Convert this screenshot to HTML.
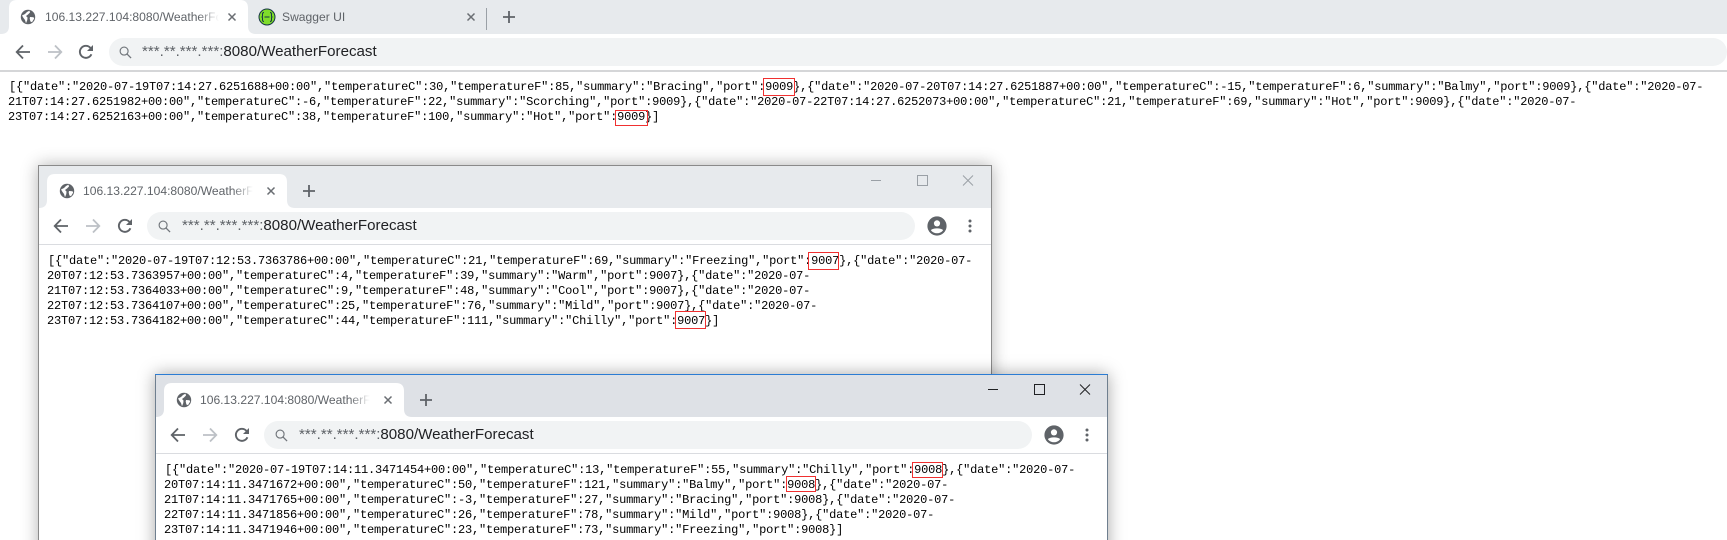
<!DOCTYPE html>
<html><head><meta charset="utf-8"><title>WeatherForecast</title>
<style>
html,body{margin:0;padding:0;background:#fff;width:1727px;height:540px;overflow:hidden}
#page{position:relative;width:1727px;height:540px;overflow:hidden;background:#fff}
.win{position:absolute;background:#fff;box-sizing:border-box;overflow:visible}
.strip{position:absolute;left:0;top:0;right:0;height:43px}
.addr{position:absolute;left:109px;top:47px;height:28px;background:#f1f3f4;border-radius:14px}
.sep{position:absolute;left:0;right:0;top:79px;height:1px;background:#dadce0}
.ic{position:absolute;left:0;top:0;overflow:visible}
.ttl{position:absolute;left:45px;top:19px;width:170px;height:16px;overflow:hidden;white-space:nowrap;font:12.1px/15px "Liberation Sans",sans-serif;color:#5f6368;-webkit-mask-image:linear-gradient(90deg,#000 88%,transparent);mask-image:linear-gradient(90deg,#000 88%,transparent)}
.url{position:absolute;left:144px;top:52px;white-space:nowrap;font:15.1px/18px "Liberation Sans",sans-serif;color:#202124}
.url i{font-style:normal;color:#5f6368}
.l{position:absolute;white-space:pre;font:12px/15px "Liberation Mono",monospace;letter-spacing:-.2px;color:#000}
.r{position:absolute;border:1px solid #f03030;box-sizing:border-box}
</style></head><body>
<div id="page">

<svg width="0" height="0" style="position:absolute"><defs>
<symbol id="globe" viewBox="0 0 16 16" overflow="visible"><circle cx="8" cy="8" r="7.2" fill="#5f6368"/><path d="M2 6.500 5 5 7 3 9.500 1.600 10 3.500 8 5.500 6 7 7.500 8.500 7.300 11 6 14.200 5 11 3.500 9ZM10 8l3.500.2.7 1.300-2.200 3.600-1.600-.6-.7-3Z" fill="#fff" stroke="none"/></symbol>
<symbol id="back" viewBox="0 0 16 16" overflow="visible"><path d="M15 8H2M8 1.500 1.700 8 8 14.500" fill="none" stroke="currentColor" stroke-width="1.800"/></symbol>
<symbol id="fwd" viewBox="0 0 16 16" overflow="visible"><path d="M1 8H14M8 1.500 14.300 8 8 14.500" fill="none" stroke="currentColor" stroke-width="1.800"/></symbol>
<symbol id="rel" viewBox="0 0 16 16" overflow="visible"><path d="M13.400 10.200A6 6 0 1 1 12.400 3.900" fill="none" stroke="#5f6368" stroke-width="1.900"/><path d="M15 1V7H9Z" fill="#5f6368"/></symbol>
<symbol id="srch" viewBox="0 0 14 14" overflow="visible"><circle cx="5.500" cy="5.500" r="4.300" fill="none" stroke="#70757a" stroke-width="1.200"/><path d="M8.700 8.700 13 13" stroke="#70757a" stroke-width="1.400"/></symbol>
<symbol id="x" viewBox="0 0 10 10" overflow="visible"><path d="M1.500 1.500 8.500 8.500M8.500 1.500 1.500 8.500" stroke="#6a6e73" stroke-width="1.500"/></symbol>
<symbol id="plus" viewBox="0 0 12 12" overflow="visible"><path d="M6 0V12M0 6H12" stroke="#5f6368" stroke-width="1.800"/></symbol>
<symbol id="prof" viewBox="0 0 20 20" overflow="visible"><circle cx="10" cy="10" r="9.600" fill="#5f6368"/><circle cx="10" cy="7.400" r="3.100" fill="#fff"/><path d="M3.900 14.200C5.600 11.800 14.400 11.800 16.100 14.200 14.600 16.200 12.400 17.200 10 17.200S5.400 16.200 3.900 14.200Z" fill="#fff"/></symbol>
</defs></svg>

<!-- main window -->
<div class="win" style="left:0;top:-9px;width:1727px;height:549px">
  <div class="strip" style="background:#e7eaed"></div>
  <svg class="ic" width="1727" height="80">
    <path d="M1 43Q9 43 9 35V17Q9 9 17 9H240Q248 9 248 17V35Q248 43 256 43Z" fill="#fff"/>
    <use href="#globe" x="20" y="18" width="16" height="16"/>
    <use href="#x" x="227" y="21" width="10" height="10"/>
    <circle cx="267" cy="26" r="8" fill="#7fdc2a" stroke="#173647" stroke-width="1"/>
    <path d="M264 21.500Q262.500 21.500 262.500 23V25Q262.500 26 261.500 26 262.500 26 262.500 27V29Q262.500 30.500 264 30.500M270 21.500Q271.500 21.500 271.500 23V25Q271.500 26 272.500 26 271.500 26 271.500 27V29Q271.500 30.500 270 30.500M264.500 26H269.500" fill="none" stroke="#173647" stroke-width="1"/>
    <use href="#x" x="466" y="21" width="10" height="10"/>
    <rect x="486" y="17" width="1" height="22" fill="#9aa0a6"/>
    <use href="#plus" x="503" y="20" width="12" height="12"/>
    <use href="#back" x="15" y="53" width="16" height="16" color="#5f6368"/>
    <use href="#fwd" x="47" y="53" width="16" height="16" color="#bdc1c6"/>
    <use href="#rel" x="78" y="53" width="16" height="16"/>
  </svg>
  <div class="ttl" style="width:174px">106.13.227.104:8080/WeatherForecast</div>
  <div class="ttl" style="left:282px">Swagger UI</div>
  <div class="addr" style="width:1618px"></div>
  <svg class="ic" width="200" height="80"><use href="#srch" x="119" y="55" width="13" height="13"/></svg>
  <div class="url" style="left:142px"><i>***.**.***.***:</i>8080/WeatherForecast</div>
  <div class="sep" style="background:#d5d6d8;height:2px"></div>
  <div class="l" style="left:9px;top:89px">[{"date":"2020-07-19T07:14:27.6251688+00:00","temperatureC":30,"temperatureF":85,"summary":"Bracing","port":9009},{"date":"2020-07-20T07:14:27.6251887+00:00","temperatureC":-15,"temperatureF":6,"summary":"Balmy","port":9009},{"date":"2020-07-</div>
  <div class="l" style="left:8px;top:104px">21T07:14:27.6251982+00:00","temperatureC":-6,"temperatureF":22,"summary":"Scorching","port":9009},{"date":"2020-07-22T07:14:27.6252073+00:00","temperatureC":21,"temperatureF":69,"summary":"Hot","port":9009},{"date":"2020-07-</div>
  <div class="l" style="left:8px;top:119px">23T07:14:27.6252163+00:00","temperatureC":38,"temperatureF":100,"summary":"Hot","port":9009}]</div>
  <div class="r" style="left:763px;top:87px;width:32px;height:18px"></div>
  <div class="r" style="left:615px;top:119px;width:33px;height:16px"></div>
</div>

<!-- second window -->
<div class="win" style="left:38px;top:165px;width:954px;height:400px;outline:1px solid #8a8a8a;outline-offset:-1px;box-shadow:0 0 16px rgba(0,0,0,.3)">
  <div class="strip" style="left:1px;right:1px;top:1px;height:42px;background:#e7eaed"></div>
  <svg class="ic" width="954" height="80">
    <path d="M1 43Q9 43 9 35V17Q9 9 17 9H241Q249 9 249 17V35Q249 43 257 43Z" fill="#fff"/>
    <use href="#globe" x="21" y="18" width="16" height="16"/>
    <use href="#x" x="228" y="21" width="10" height="10"/>
    <use href="#plus" x="265" y="20" width="12" height="12"/>
    <use href="#back" x="15" y="53" width="16" height="16" color="#5f6368"/>
    <use href="#fwd" x="47" y="53" width="16" height="16" color="#bdc1c6"/>
    <use href="#rel" x="79" y="53" width="16" height="16"/>
    <use href="#prof" x="889" y="51" width="20" height="20"/>
    <circle cx="932" cy="56" r="1.500" fill="#5f6368"/><circle cx="932" cy="61" r="1.500" fill="#5f6368"/><circle cx="932" cy="66" r="1.500" fill="#5f6368"/>
    <path d="M833 15.500H843" stroke="#9aa0a6"/>
    <rect x="879.500" y="10.500" width="10" height="10" fill="none" stroke="#9aa0a6"/>
    <path d="M925 10.500 935 20.500M935 10.500 925 20.500" stroke="#9aa0a6" fill="none"/>
  </svg>
  <div class="ttl">106.13.227.104:8080/WeatherForecast</div>
  <div class="addr" style="width:768px"></div>
  <svg class="ic" width="200" height="80"><use href="#srch" x="120" y="55" width="13" height="13"/></svg>
  <div class="url"><i>***.**.***.***:</i>8080/WeatherForecast</div>
  <div class="sep" style="left:1px;right:1px"></div>
  <div class="l" style="left:10px;top:89px">[{"date":"2020-07-19T07:12:53.7363786+00:00","temperatureC":21,"temperatureF":69,"summary":"Freezing","port":9007},{"date":"2020-07-</div>
  <div class="l" style="left:9px;top:104px">20T07:12:53.7363957+00:00","temperatureC":4,"temperatureF":39,"summary":"Warm","port":9007},{"date":"2020-07-</div>
  <div class="l" style="left:9px;top:119px">21T07:12:53.7364033+00:00","temperatureC":9,"temperatureF":48,"summary":"Cool","port":9007},{"date":"2020-07-</div>
  <div class="l" style="left:9px;top:134px">22T07:12:53.7364107+00:00","temperatureC":25,"temperatureF":76,"summary":"Mild","port":9007},{"date":"2020-07-</div>
  <div class="l" style="left:9px;top:149px">23T07:12:53.7364182+00:00","temperatureC":44,"temperatureF":111,"summary":"Chilly","port":9007}]</div>
  <div class="r" style="left:770px;top:87px;width:31px;height:18px"></div>
  <div class="r" style="left:637px;top:146px;width:31px;height:18px"></div>
</div>

<!-- third window -->
<div class="win" style="left:155px;top:374px;width:953px;height:190px;box-shadow:inset 0 1px #2b7cd3,inset 1px 0 #6f7f8f,inset -1px 0 #6f7f8f,0 0 16px rgba(0,0,0,.35)">
  <div class="strip" style="left:1px;right:1px;top:1px;height:42px;background:#dee1e6"></div>
  <svg class="ic" width="953" height="80">
    <path d="M1 43Q9 43 9 35V17Q9 9 17 9H241Q249 9 249 17V35Q249 43 257 43Z" fill="#fff"/>
    <use href="#globe" x="21" y="18" width="16" height="16"/>
    <use href="#x" x="228" y="21" width="10" height="10"/>
    <use href="#plus" x="265" y="20" width="12" height="12"/>
    <use href="#back" x="15" y="53" width="16" height="16" color="#5f6368"/>
    <use href="#fwd" x="47" y="53" width="16" height="16" color="#bdc1c6"/>
    <use href="#rel" x="79" y="53" width="16" height="16"/>
    <use href="#prof" x="889" y="51" width="20" height="20"/>
    <circle cx="932" cy="56" r="1.500" fill="#5f6368"/><circle cx="932" cy="61" r="1.500" fill="#5f6368"/><circle cx="932" cy="66" r="1.500" fill="#5f6368"/>
    <path d="M833 15.500H843" stroke="#202124"/>
    <rect x="879.500" y="10.500" width="10" height="10" fill="none" stroke="#202124"/>
    <path d="M925 10.500 935 20.500M935 10.500 925 20.500" stroke="#202124" fill="none"/>
  </svg>
  <div class="ttl">106.13.227.104:8080/WeatherForecast</div>
  <div class="addr" style="width:768px"></div>
  <svg class="ic" width="200" height="80"><use href="#srch" x="120" y="55" width="13" height="13"/></svg>
  <div class="url"><i>***.**.***.***:</i>8080/WeatherForecast</div>
  <div class="sep" style="left:1px;right:1px"></div>
  <div class="l" style="left:10px;top:89px">[{"date":"2020-07-19T07:14:11.3471454+00:00","temperatureC":13,"temperatureF":55,"summary":"Chilly","port":9008},{"date":"2020-07-</div>
  <div class="l" style="left:9px;top:104px">20T07:14:11.3471672+00:00","temperatureC":50,"temperatureF":121,"summary":"Balmy","port":9008},{"date":"2020-07-</div>
  <div class="l" style="left:9px;top:119px">21T07:14:11.3471765+00:00","temperatureC":-3,"temperatureF":27,"summary":"Bracing","port":9008},{"date":"2020-07-</div>
  <div class="l" style="left:9px;top:134px">22T07:14:11.3471856+00:00","temperatureC":26,"temperatureF":78,"summary":"Mild","port":9008},{"date":"2020-07-</div>
  <div class="l" style="left:9px;top:149px">23T07:14:11.3471946+00:00","temperatureC":23,"temperatureF":73,"summary":"Freezing","port":9008}]</div>
  <div class="r" style="left:757px;top:88px;width:31px;height:16px"></div>
  <div class="r" style="left:631px;top:102px;width:30px;height:16px"></div>
</div>

</div>
</body></html>
